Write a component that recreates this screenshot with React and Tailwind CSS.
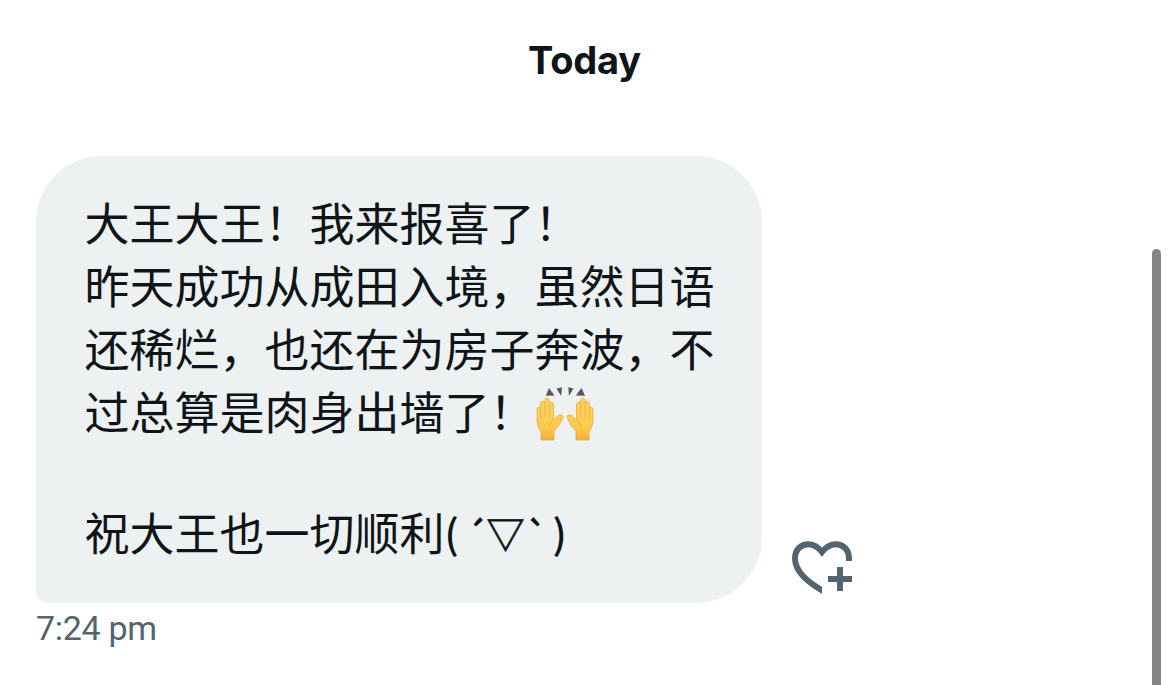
function Hand() {
  return (
    <g>
      <path d="M5 54V46C2.5 42 1 38 1 34V23.5C1 20.5 4.3 20.5 4.5 23V17.5C4.7 14.6 8.6 14.6 8.8 17.5V14.5C9 11.3 13.2 11.3 13.4 14.5V18C13.7 15.4 17.3 15.6 17.5 18.5V33C18.7 33.3 20 31.5 21.6 30C24 27.8 27.8 28.8 26.8 31.6C25 35.5 22 42.5 18 45V54Z" fill="url(#skin)" stroke="#e9a62d" strokeWidth=".7" />
      <path d="M4.6 23V32M8.9 17.5V31M13.3 17V31" stroke="#e8b040" strokeWidth=".8" fill="none" />
      <path d="M17.3 34C14.5 36 13.4 38.5 13.3 41" stroke="#e6a735" strokeWidth=".8" fill="none" />
    </g>
  );
}

function RaisedHands() {
  return (
    <svg role="img" aria-label="🙌" viewBox="0 0 58 56" className="mt-[2px] h-[56px] w-[58px]">
      <defs>
        <linearGradient id="skin" x1="0" y1="0" x2="0" y2="1">
          <stop offset="0" stopColor="#fdd262" />
          <stop offset=".7" stopColor="#fdca50" />
          <stop offset="1" stopColor="#eeb03c" />
        </linearGradient>
      </defs>
      <Hand />
      <g transform="translate(58 0) scale(-1 1)"><Hand /></g>
      <path d="M13 2L18.5 9.4L9.8 9.8ZM20.5 2.5L26 1.3L25.2 10ZM32.3 1.3L37.5 2.5L33 10ZM45.5 2L49 9.8L39.8 9.4Z" fill="#56595c" />
    </svg>
  );
}

function HeartPlus() {
  return (
    <svg aria-label="Add reaction" viewBox="0 0 24 24" className="ml-[24px] h-[72px] w-[72px]" fill="none" stroke="#536471" strokeWidth="2">
      <clipPath id="heart-cut"><path d="M0 0H24V12H12V24H0Z" /></clipPath>
      <path clipPath="url(#heart-cut)" d="M21 10V9.1C21 6 18.8 4.4 16.6 4.4C14.9 4.4 13.3 5.3 12 7C10.7 5.3 9.1 4.4 7.4 4.4C5.2 4.4 3 6 3 9.1C3 13 6.6 16.8 12.6 20.1" />
      <path d="M18 12V20M14 16H22" />
    </svg>
  );
}

export default function App() {
  return (
    <main className="flex h-[685px] w-[1170px] overflow-hidden bg-white font-['Inter','Noto_Sans_CJK_SC',sans-serif] text-[#0f1419]">
      <section className="flex w-[1152px] flex-col pl-9">
        <h1 className="ml-[492px] mt-[36px] h-[48px] text-[38px] font-bold leading-[48px] tracking-[-0.2px]">Today</h1>
        <div className="mt-[72px] flex items-end">
          <div className="h-[447px] w-[726px] rounded-[66px] rounded-bl-[12px] bg-[#edf1f2] pl-[48.5px] pt-[34px] font-['Noto_Sans_CJK_SC',sans-serif] text-[45px] leading-[63px]">
            <p>大王大王！我来报喜了！</p>
            <p>昨天成功从成田入境，虽然日语</p>
            <p>还稀烂，也还在为房子奔波，不</p>
            <p className="flex h-[63px]"><span>过总算是肉身出墙了！</span><span className="ml-[1.5px] mt-[5px]"><RaisedHands /></span></p>
            <p className="mt-[58px] flex h-[63px] items-baseline whitespace-pre">
              <span>祝大王也一切顺利</span>
              <span className="mb-[2px] w-[20px] -translate-y-[2px] text-[40px] font-medium leading-[55px]">(</span>
              <span className="w-[22px] text-[38px] font-medium leading-[55px]">´</span>
              <span className="w-[39px] -translate-y-[3px] text-[38px] leading-[55px] [-webkit-text-stroke:0.8px_#0f1419]">▽</span>
              <span className="w-[27px] text-[38px] font-medium leading-[55px]">`</span>
              <span className="-translate-y-[2px] text-[40px] font-medium leading-[55px]">)</span>
            </p>
          </div>
          <HeartPlus />
        </div>
        <time className="mt-[3px] font-['Roboto',sans-serif] text-[34px] leading-[44px] tracking-[-0.3px] text-[#536471]">7:24 pm</time>
      </section>
      <div className="mt-[249px] h-[436px] w-[9px] rounded-t-full bg-[#858585]" />
    </main>
  );
}
